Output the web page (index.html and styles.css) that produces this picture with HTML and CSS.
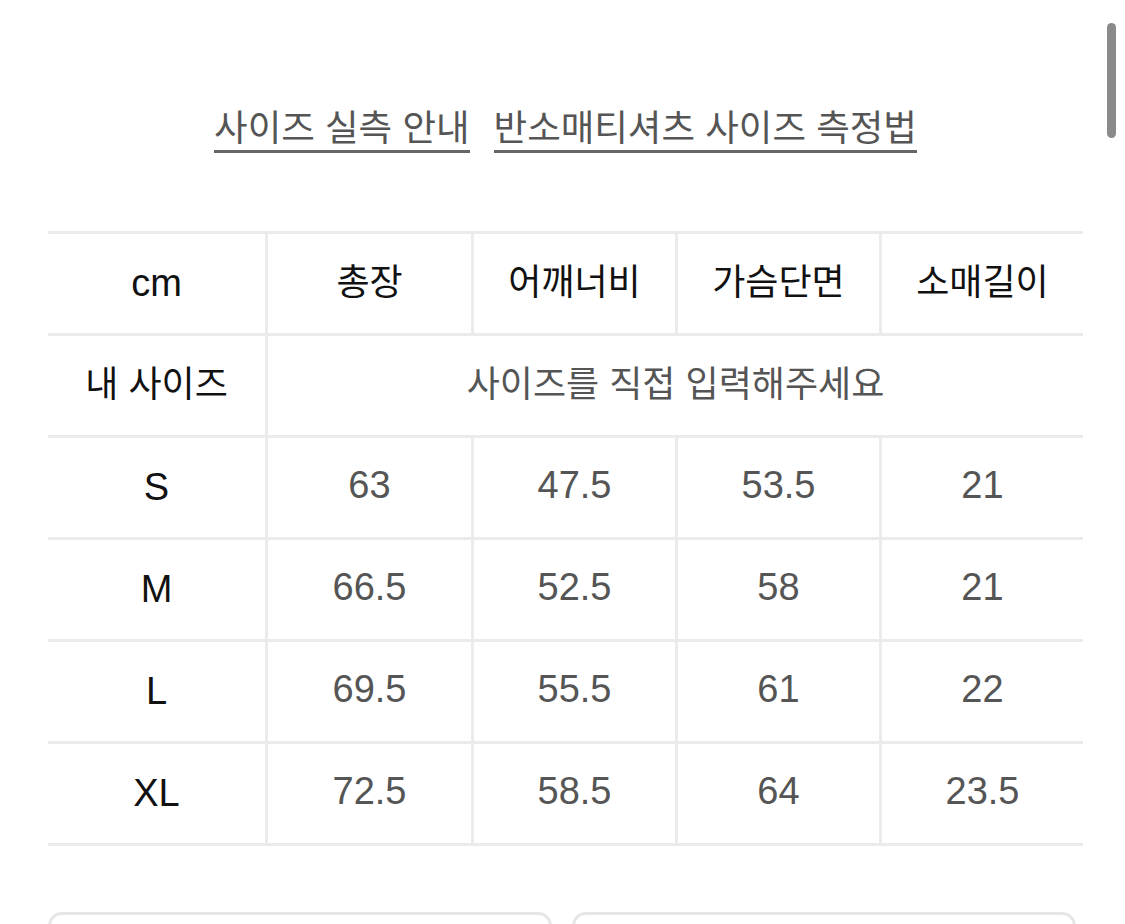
FILE: index.html
```html
<!DOCTYPE html>
<html lang="ko">
<head>
<meta charset="utf-8">
<title>사이즈 실측 안내</title>
<link rel="stylesheet" href="styles.css">
</head>
<body>
<div class="page">
  <nav class="links">
    <a class="link" href="#">사이즈 실측 안내</a>
    <a class="link" href="#">반소매티셔츠 사이즈 측정법</a>
  </nav>
  <table class="size-table">
    <colgroup>
      <col class="c-first">
      <col class="c-wide">
      <col class="c-std">
      <col class="c-std">
      <col class="c-std">
    </colgroup>
    <thead>
      <tr>
        <th class="head lat">cm</th>
        <th class="head ko">총장</th>
        <th class="head ko">어깨너비</th>
        <th class="head ko">가슴단면</th>
        <th class="head ko">소매길이</th>
      </tr>
    </thead>
    <tbody>
      <tr>
        <th class="head ko">내 사이즈</th>
        <td class="val ko" colspan="4">사이즈를 직접 입력해주세요</td>
      </tr>
      <tr>
        <th class="head lat">S</th>
        <td class="val">63</td><td class="val">47.5</td><td class="val">53.5</td><td class="val">21</td>
      </tr>
      <tr>
        <th class="head lat">M</th>
        <td class="val">66.5</td><td class="val">52.5</td><td class="val">58</td><td class="val">21</td>
      </tr>
      <tr>
        <th class="head lat">L</th>
        <td class="val">69.5</td><td class="val">55.5</td><td class="val">61</td><td class="val">22</td>
      </tr>
      <tr>
        <th class="head lat">XL</th>
        <td class="val">72.5</td><td class="val">58.5</td><td class="val">64</td><td class="val">23.5</td>
      </tr>
    </tbody>
  </table>
  <div class="buttons">
    <div class="btn"></div>
    <div class="btn"></div>
  </div>
</div>
<div class="scroll-indicator"></div>
</body>
</html>
```
FILE: styles.css
```css
html, body {
  margin: 0;
  padding: 0;
  background: #ffffff;
  overflow: hidden;
  height: 100%;
}
body {
  font-family: "Liberation Sans", "Noto Sans CJK KR", sans-serif;
  color: #111111;
}
.page {
  padding: 0 42px 0 48px;
}
.links {
  display: flex;
  justify-content: center;
  gap: 24px;
  padding: 102px 0 78px 0;
}
.link {
  font-family: "Noto Sans CJK KR", sans-serif;
  font-size: 36.5px;
  font-weight: 400;
  line-height: 48px;
  color: #555555;
  text-decoration: none;
  border-bottom: 3px solid #666666;
}
.size-table {
  width: 1035px;
  table-layout: fixed;
  border-collapse: separate;
  border-spacing: 0;
  border-top: 3px solid #ebebeb;
}
.c-first { width: 217px; }
.c-wide { width: 206px; }
.c-std { width: 204px; }
.size-table th,
.size-table td {
  height: 99px;
  padding: 0;
  text-align: center;
  vertical-align: middle;
  border-bottom: 3px solid #ebebeb;
  border-left: 3px solid #ebebeb;
  box-sizing: content-box;
}
.size-table tr > :first-child {
  border-left: none;
}
.head {
  font-weight: 400;
  color: #111111;
}
.val {
  font-weight: 400;
  color: #555555;
}
.lat {
  font-size: 38px;
}
.size-table .val {
  font-size: 38px;
  height: 95px;
  padding-bottom: 4px;
}
.size-table .ko {
  font-family: "Noto Sans CJK KR", sans-serif;
  font-size: 36px;
  height: 90px;
  padding-bottom: 9px;
}
.buttons {
  display: grid;
  grid-template-columns: 504px 504px;
  gap: 20px;
  margin-top: 66px;
}
.btn {
  height: 110px;
  border: 3px solid #e6e6e6;
  border-radius: 14px;
  box-sizing: border-box;
}
.scroll-indicator {
  position: fixed;
  left: 1107px;
  top: 23px;
  width: 9px;
  height: 115px;
  border-radius: 5px;
  background: #8a8a8a;
}
```
